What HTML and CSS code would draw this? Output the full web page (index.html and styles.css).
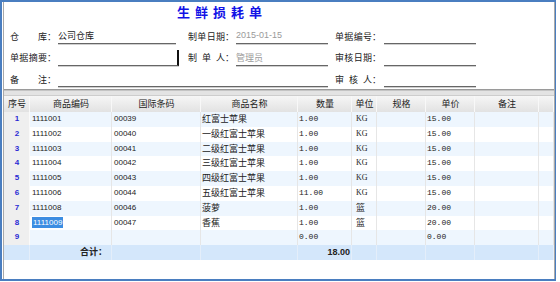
FILE: index.html
```html
<!DOCTYPE html>
<html>
<head>
<meta charset="utf-8">
<link rel="stylesheet" href="styles.css">
</head>
<body>
<div class="win">
  <div class="inner">
    <div class="panel">
      <div class="title">生鲜损耗单</div>
      <div class="form">
        <div class="lbl"><span class="t">仓库</span><span>：</span></div>
        <div class="cell"><div class="field w1">公司仓库</div></div>
        <div class="lbl"><span class="t">制单日期</span><span>：</span></div>
        <div class="cell"><div class="field w2 gray num">2015-01-15</div></div>
        <div class="lbl"><span class="t">单据编号</span><span>：</span></div>
        <div class="cell"><div class="field w2"></div></div>

        <div class="lbl"><span class="t">单据摘要</span><span>：</span></div>
        <div class="cell"><div class="field w1 focus"></div></div>
        <div class="lbl"><span class="t">制单人</span><span>：</span></div>
        <div class="cell"><div class="field w2 gray">管理员</div></div>
        <div class="lbl"><span class="t">审核日期</span><span>：</span></div>
        <div class="cell"><div class="field w2"></div></div>

        <div class="lbl"><span class="t">备注</span><span>：</span></div>
        <div class="cell span3"><div class="field w3"></div></div>
        <div class="lbl"><span class="t">审核人</span><span>：</span></div>
        <div class="cell"><div class="field w2"></div></div>
      </div>
    </div>
    <div class="band"></div>
    <div class="grid">
      <div class="row head">
        <div class="c">序号</div><div class="c">商品编码</div><div class="c">国际条码</div><div class="c">商品名称</div><div class="c">数量</div><div class="c">单位</div><div class="c">规格</div><div class="c">单价</div><div class="c">备注</div><div class="c"></div>
      </div>
      <div class="row odd">
        <div class="c no">1</div><div class="c code">1111001</div><div class="c code">00039</div><div class="c name">红富士苹果</div><div class="c mono">1.00</div><div class="c unit">KG</div><div class="c"></div><div class="c mono">15.00</div><div class="c"></div><div class="c"></div>
      </div>
      <div class="row">
        <div class="c no">2</div><div class="c code">1111002</div><div class="c code">00040</div><div class="c name">一级红富士苹果</div><div class="c mono">1.00</div><div class="c unit">KG</div><div class="c"></div><div class="c mono">15.00</div><div class="c"></div><div class="c"></div>
      </div>
      <div class="row odd">
        <div class="c no">3</div><div class="c code">1111003</div><div class="c code">00041</div><div class="c name">二级红富士苹果</div><div class="c mono">1.00</div><div class="c unit">KG</div><div class="c"></div><div class="c mono">15.00</div><div class="c"></div><div class="c"></div>
      </div>
      <div class="row">
        <div class="c no">4</div><div class="c code">1111004</div><div class="c code">00042</div><div class="c name">三级红富士苹果</div><div class="c mono">1.00</div><div class="c unit">KG</div><div class="c"></div><div class="c mono">15.00</div><div class="c"></div><div class="c"></div>
      </div>
      <div class="row odd">
        <div class="c no">5</div><div class="c code">1111005</div><div class="c code">00043</div><div class="c name">四级红富士苹果</div><div class="c mono">1.00</div><div class="c unit">KG</div><div class="c"></div><div class="c mono">15.00</div><div class="c"></div><div class="c"></div>
      </div>
      <div class="row">
        <div class="c no">6</div><div class="c code">1111006</div><div class="c code">00044</div><div class="c name">五级红富士苹果</div><div class="c mono">11.00</div><div class="c unit">KG</div><div class="c"></div><div class="c mono">15.00</div><div class="c"></div><div class="c"></div>
      </div>
      <div class="row odd">
        <div class="c no">7</div><div class="c code">1111008</div><div class="c code">00046</div><div class="c name">菠萝</div><div class="c mono">1.00</div><div class="c unit cjk">篮</div><div class="c"></div><div class="c mono">20.00</div><div class="c"></div><div class="c"></div>
      </div>
      <div class="row">
        <div class="c no">8</div><div class="c code"><span class="sel">1111009</span></div><div class="c code">00047</div><div class="c name">香蕉</div><div class="c mono">1.00</div><div class="c unit cjk">篮</div><div class="c"></div><div class="c mono">20.00</div><div class="c"></div><div class="c"></div>
      </div>
      <div class="row odd">
        <div class="c no">9</div><div class="c code"></div><div class="c code"></div><div class="c name"></div><div class="c mono">0.00</div><div class="c unit"></div><div class="c"></div><div class="c mono">0.00</div><div class="c"></div><div class="c"></div>
      </div>
      <div class="row total">
        <div class="c"></div><div class="c tr">合计：</div><div class="c"></div><div class="c"></div><div class="c tr sum">18.00</div><div class="c"></div><div class="c"></div><div class="c"></div><div class="c"></div><div class="c"></div>
      </div>
    </div>
  </div>
</div>
</body>
</html>
```

FILE: styles.css
```css
html, body {
  margin: 0;
  padding: 0;
  background: #ffffff;
}
body {
  width: 560px;
  height: 282px;
  overflow: hidden;
  font-family: "Liberation Sans", "Noto Sans CJK SC", sans-serif;
  font-size: 9px;
  color: #222;
}
.win {
  width: 553px;
  height: 277px;
  border-style: solid;
  border-color: #4a7ec0;
  border-width: 2px 1px 2px 2px;
}
.inner {
  height: 277px;
  margin-left: 1px;
  width: 550px;
  border-left: 1px solid #a9a9a9;
  border-right: 1px solid #a9a9a9;
  display: flex;
  flex-direction: column;
}
.panel {
  height: 87px;
  border-bottom: 1px solid #9a9a9a;
  background: #fff;
}
.title {
  margin-left: 173px;
  height: 20px;
  line-height: 20px;
  font-family: "Noto Sans CJK SC", sans-serif;
  font-size: 13px;
  font-weight: bold;
  letter-spacing: 5px;
  color: #1212e6;
}
.form {
  margin-top: 7px;
  padding-left: 6px;
  display: grid;
  grid-template-columns: 48px 130px 48px 99px 49px 92px;
  grid-template-rows: 15px 15px 15px;
  row-gap: 6.5px;
}
.lbl {
  display: flex;
  align-items: center;
  height: 14px;
  font-family: "Noto Sans CJK SC", sans-serif;
  font-size: 9px;
  color: #222;
}
.lbl .t {
  width: 37px;
  text-align: justify;
  text-align-last: justify;
}
.cell {
  display: flex;
}
.span3 {
  grid-column: span 3;
}
.field {
  box-sizing: border-box;
  height: 15px;
  line-height: 13px;
  border-bottom: 1px solid #666;
  box-shadow: 0 1px 0 #cfcfcf;
  font-family: "Noto Sans CJK SC", sans-serif;
  font-size: 9px;
  color: #222;
}
.w1 { width: 118px; }
.w2 { width: 92px; }
.w3 { width: 270px; }
.focus {
  width: 121px;
  border-right: 2px solid #111;
  height: 16px;
  margin-top: -1px;
}
.gray { color: #9a9a9a; }
.num { font-family: "Liberation Sans", sans-serif; font-size: 9px; }
.band {
  height: 4px;
  background: #e3e3e3;
  border-top: 1px solid #c4c4c4;
  border-bottom: 1px solid #cdcdcd;
}
.grid {
  display: flex;
  flex-direction: column;
}
.row {
  display: grid;
  grid-template-columns: 26px 82px 89px 97px 54px 25px 49px 49px 64px 15px;
  height: 14.8px;
  background: #ffffff;
}
.row.odd { background: #eef6fe; }
.row.head {
  height: 16px;
  background: linear-gradient(#f6f6f6, #e2e2e2);
}
.c {
  box-sizing: border-box;
  border-right: 1px solid #e6e6e6;
  padding-left: 1px;
  white-space: nowrap;
  overflow: hidden;
  line-height: 14.8px;
}
.head .c {
  border-right: 1px solid #f8f8f8;
  text-align: center;
  line-height: 16px;
  font-family: "Noto Sans CJK SC", sans-serif;
  font-size: 9px;
  color: #222;
}
.no {
  background: #efefef;
  color: #2a2ad4;
  text-align: center;
  font-weight: bold;
  font-size: 8px;
  border-right: 1px solid #fafafa;
}
.code {
  font-size: 8px;
  padding-left: 2px;
}
.name {
  font-family: "Noto Sans CJK SC", sans-serif;
  font-size: 9px;
}
.mono {
  font-family: "Liberation Mono", monospace;
  font-size: 8px;
}
.unit {
  font-family: "Liberation Serif", serif;
  font-size: 8px;
  padding-left: 4px;
}
.unit.cjk {
  font-family: "Noto Sans CJK SC", sans-serif;
  font-size: 9px;
}
.sel {
  background: #3c8de2;
  color: #ffffff;
  padding: 1px 1px;
}
.row.total {
  background: #d4e7fb;
}
.total .c {
  border-right: 1px solid #e4eefa;
  font-weight: bold;
}
.tr {
  text-align: right;
  padding-right: 4px;
  font-family: "Noto Sans CJK SC", sans-serif;
}
.sum {
  font-family: "Liberation Sans", sans-serif;
  padding-right: 1px;
}
```
